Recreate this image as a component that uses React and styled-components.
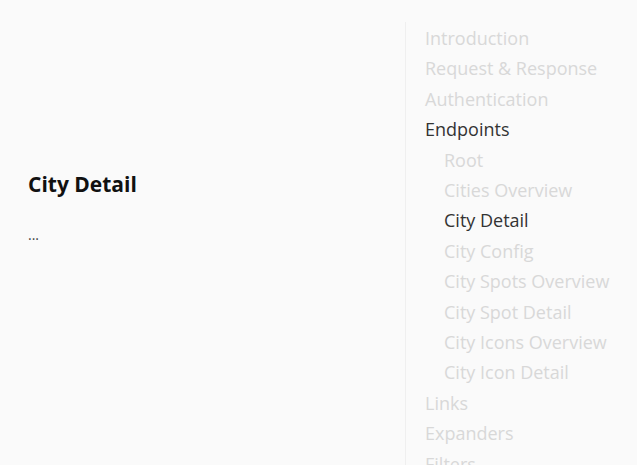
import React from "react";
import styled, {createGlobalStyle} from "styled-components";

const GlobalStyle = createGlobalStyle`
  html, body {
    margin: 0;
    padding: 0;
    background: #fafafa;
  }
  body {
    font-family: "Open Sans", "Noto Sans", sans-serif;
    color: #111;
  }
`;

const Page = styled.div`
  display: flex;
  width: 637px;
  height: 465px;
  overflow: hidden;
`;

const Content = styled.main`
  flex: 1;
  padding: 170px 28px 0;
`;

const Title = styled.h2`
  margin: 0;
  font-size: 21px;
  font-weight: 700;
  line-height: 28px;
  color: #111;
`;

const Body = styled.p`
  margin: 27px 0 0;
  font-size: 14px;
  color: #444;
`;

// 右側目錄
const Sidebar = styled.nav`
  width: 212px;
  margin-top: 22px;
  padding: 1px 0 0 19px;
  border-left: 1px solid #efefef;
`;

const NavList = styled.ul`
  list-style: none;
  margin: 0;
  padding: 0;
`;

const NavItem = styled.li`
  font-size: 18px;
  line-height: 30.4px;
  white-space: nowrap;
  padding-left: ${(p) => (p.$sub ? "19px" : "0")};
  color: ${(p) => (p.$active ? "#333" : "#d8d8d8")};
`;

const items = [
  {label: "Introduction"},
  {label: "Request & Response"},
  {label: "Authentication"},
  {label: "Endpoints", active: true},
  {label: "Root", sub: true},
  {label: "Cities Overview", sub: true},
  {label: "City Detail", sub: true, active: true},
  {label: "City Config", sub: true},
  {label: "City Spots Overview", sub: true},
  {label: "City Spot Detail", sub: true},
  {label: "City Icons Overview", sub: true},
  {label: "City Icon Detail", sub: true},
  {label: "Links"},
  {label: "Expanders"},
  {label: "Filters"},
];

const App = () => {
  return (
    <>
      <GlobalStyle />
      <Page>
        <Content>
          <Title>City Detail</Title>
          <Body>...</Body>
        </Content>
        <Sidebar>
          <NavList>
            {items.map((it) => (
              <NavItem key={it.label} $sub={it.sub} $active={it.active}>
                {it.label}
              </NavItem>
            ))}
          </NavList>
        </Sidebar>
      </Page>
    </>
  );
};

export default App;
